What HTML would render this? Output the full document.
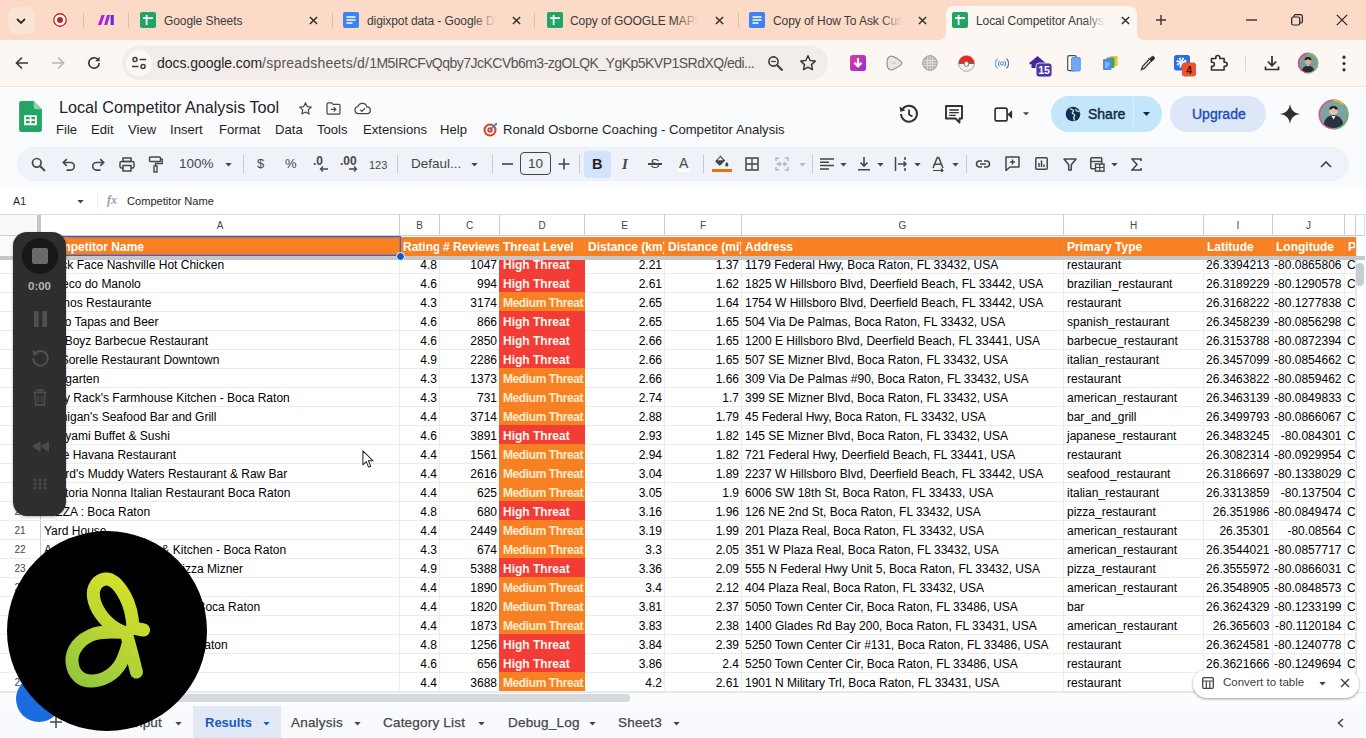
<!DOCTYPE html>
<html lang="en">
<head>
<meta charset="utf-8">
<title>Local Competitor Analysis Tool - Google Sheets</title>
<style>
*{box-sizing:border-box;margin:0;padding:0}
html,body{width:1366px;height:738px;overflow:hidden;background:#fff;font-family:"Liberation Sans",sans-serif;color:#1f1f1f}
div,span,svg{position:absolute}
span.i{position:static}
#tabbar{left:0;top:0;width:1366px;height:40px;background:#fbdbc8}
#addr{left:0;top:40px;width:1366px;height:47px;background:#fdf7f3;border-bottom:1px solid #f1e3da}
.tt{top:11px;height:20px;line-height:20px;font-size:12px;letter-spacing:-.08px;color:#3b3a3a;white-space:nowrap;overflow:hidden}
.tx{top:10px;width:20px;height:20px;line-height:20px;text-align:center;font-size:15px;color:#2e2e2e}
.sep{top:13px;width:1px;height:15px;background:#efb999}
#urlpill{left:122px;top:46px;width:706px;height:34px;border-radius:17px;background:#f2ecea}
#url{left:157px;top:46px;height:34px;line-height:34px;font-size:14px;letter-spacing:-.05px;color:#1f1f1f;white-space:nowrap}
#url span{position:static;color:#575553}
#docs{left:0;top:88px;width:1366px;height:127px;background:#f9fbfd}
#title{left:59px;top:96px;font-size:16.2px;line-height:22px;color:#1f1f1f;white-space:nowrap}
.menu{top:121px;font-size:13.1px;line-height:17px;color:#1f1f1f;white-space:nowrap}
#tb{left:17px;top:147px;width:1332px;height:34px;border-radius:17px;background:#eff3f9}
.tbt{font-size:13px;color:#444746;white-space:nowrap;line-height:16px}
.vs{top:155px;width:1px;height:18px;background:#c7cacf}
#fbar{left:0;top:187px;width:1366px;height:28px;background:#fff;border-bottom:1px solid #d9dce0}

#grid{left:0;top:215px;width:1356px;height:480px;background:#fff;overflow:hidden}
.ch{top:0;height:21px;line-height:22px;font-size:10px;color:#444746;text-align:center;background:#fff;border-right:1px solid #c9ccd1;border-bottom:1px solid #c9ccd1}
.hc{top:22px;height:19px;line-height:21px;font-size:12px;font-weight:bold;color:#fff;white-space:nowrap;overflow:hidden;padding-left:3px;border-right:1px solid #ee8a36;background:#f78122}
.r{left:0;width:1356px;height:19px;border-bottom:1px solid #eaecef}
.c{top:0;height:18px;line-height:20px;font-size:12px;color:#000;white-space:nowrap;overflow:hidden;border-right:1px solid #eaecef}
.n{text-align:right;padding-right:2px}
.n3{text-align:right;padding-right:2.500px}
.l{padding-left:3px}
.la{padding-left:3px}
.l2{padding-left:2px}
.hi{background:#f23d37;color:#fff6ee;font-weight:bold;font-size:12px;padding-left:4px;border-right:0;height:19px;top:-1px;line-height:22px}
.me{background:#f78122;color:#fdecd0;font-weight:bold;font-size:12px;padding-left:4px;border-right:0;height:19px;top:-1px;line-height:22px;letter-spacing:-.4px}
.rh{left:0;width:41px;top:0;height:18px;line-height:20px;font-size:10px;color:#444746;text-align:center;border-right:1px solid #c9ccd1;background:#fff}
.st{top:714px;font-size:13.500px;line-height:17px;color:#444746;white-space:nowrap;letter-spacing:.2px;-webkit-text-stroke:.25px #444746}</style>
</head>
<body>
<div id="tabbar"></div>
<div style="left:946px;top:6px;width:191px;height:34px;background:#fdf7f3;border-radius:8px 8px 0 0"></div>
<svg style="left:939px;top:33px" width="7" height="7" viewBox="0 0 7 7"><path d="M7 0V7H0A7 7 0 0 0 7 0z" fill="#fdf7f3"/></svg>
<svg style="left:1137px;top:33px" width="7" height="7" viewBox="0 0 7 7"><path d="M0 0V7H7A7 7 0 0 1 0 0z" fill="#fdf7f3"/></svg>
<div style="left:8px;top:7px;width:27px;height:27px;border-radius:8px;background:#fce4d5"></div>
<svg style="left:14px;top:15px" width="14" height="12" viewBox="0 0 14 12"><path d="M3 4l4 4 4-4" fill="none" stroke="#2b2b2b" stroke-width="1.8"/></svg>
<svg style="left:52px;top:12px" width="16" height="16" viewBox="0 0 18 18"><circle cx="9" cy="9" r="7" fill="#fff" stroke="#c5221f" stroke-width="1.5"/><circle cx="9" cy="9" r="3.4" fill="#c5221f"/></svg>
<div class="sep" style="left:83px"></div>
<svg style="left:98px;top:14px" width="17" height="12" viewBox="0 0 17 12"><path d="M0 11L3.6 1h3.2L3.2 11z" fill="#c413e6"/><path d="M6.2 11L9 1h3l-2.8 10z" fill="#8b2be2"/><rect x="12.6" y="1" width="3.2" height="10" fill="#6d28d9"/></svg>
<div class="sep" style="left:128px"></div>
<svg style="left:140px;top:12px" width="16" height="16" viewBox="0 0 16 16"><rect width="16" height="16" rx="2" fill="#21a464"/><path d="M3 6.2h10M6.6 3v10" stroke="#fff" stroke-width="1.7"/></svg>
<div class="tt" style="left:164px;width:140px">Google Sheets</div>
<svg style="left:309px;top:15.500px" width="9" height="9" viewBox="0 0 10 10"><path d="M1 1l8 8M9 1l-8 8" stroke="#2e2e2e" stroke-width="1.600"/></svg>
<svg style="left:343px;top:12px" width="16" height="16" viewBox="0 0 16 16"><rect width="16" height="16" rx="2" fill="#3d82f0"/><path d="M3.5 5h9M3.5 8h9M3.5 11h6" stroke="#fff" stroke-width="1.5"/></svg>
<div class="tt" style="left:367px;width:131px">digixpot data - Google D</div>
<div style="left:474px;top:11px;width:26px;height:20px;background:linear-gradient(90deg,rgba(251,219,200,0),rgba(251,219,200,1) 85%)"></div>
<svg style="left:512px;top:15.500px" width="9" height="9" viewBox="0 0 10 10"><path d="M1 1l8 8M9 1l-8 8" stroke="#2e2e2e" stroke-width="1.600"/></svg>
<svg style="left:547px;top:12px" width="16" height="16" viewBox="0 0 16 16"><rect width="16" height="16" rx="2" fill="#21a464"/><path d="M3 6.2h10M6.6 3v10" stroke="#fff" stroke-width="1.7"/></svg>
<div class="tt" style="left:570px;width:130px">Copy of GOOGLE MAPS</div>
<div style="left:676px;top:11px;width:26px;height:20px;background:linear-gradient(90deg,rgba(251,219,200,0),rgba(251,219,200,1) 85%)"></div>
<svg style="left:715px;top:15.500px" width="9" height="9" viewBox="0 0 10 10"><path d="M1 1l8 8M9 1l-8 8" stroke="#2e2e2e" stroke-width="1.600"/></svg>
<svg style="left:749px;top:12px" width="16" height="16" viewBox="0 0 16 16"><rect width="16" height="16" rx="2" fill="#3d82f0"/><path d="M3.5 5h9M3.5 8h9M3.5 11h6" stroke="#fff" stroke-width="1.5"/></svg>
<div class="tt" style="left:773px;width:132px">Copy of How To Ask Cus</div>
<div style="left:881px;top:11px;width:26px;height:20px;background:linear-gradient(90deg,rgba(251,219,200,0),rgba(251,219,200,1) 85%)"></div>
<svg style="left:918px;top:15.500px" width="9" height="9" viewBox="0 0 10 10"><path d="M1 1l8 8M9 1l-8 8" stroke="#2e2e2e" stroke-width="1.600"/></svg>
<svg style="left:952px;top:12px" width="16" height="16" viewBox="0 0 16 16"><rect width="16" height="16" rx="2" fill="#21a464"/><path d="M3 6.2h10M6.6 3v10" stroke="#fff" stroke-width="1.7"/></svg>
<div class="tt" style="left:976px;width:132px">Local Competitor Analys</div>
<div style="left:1084px;top:11px;width:26px;height:20px;background:linear-gradient(90deg,rgba(253,247,243,0),rgba(253,247,243,1) 85%)"></div>
<svg style="left:1121px;top:15.500px" width="9" height="9" viewBox="0 0 10 10"><path d="M1 1l8 8M9 1l-8 8" stroke="#2e2e2e" stroke-width="1.600"/></svg>
<div class="sep" style="left:332px"></div>
<div class="sep" style="left:534px"></div>
<div class="sep" style="left:738px"></div>
<svg style="left:1156px;top:15px" width="10" height="10" viewBox="0 0 10 10"><path d="M5 0v10M0 5h10" stroke="#3a3533" stroke-width="1.4"/></svg>
<svg style="left:1246px;top:19px" width="11" height="2" viewBox="0 0 11 2"><path d="M0 1h11" stroke="#222" stroke-width="1.3"/></svg>
<svg style="left:1291px;top:14px" width="12" height="12" viewBox="0 0 12 12"><rect x=".7" y="3" width="8" height="8" rx="1.5" fill="none" stroke="#222" stroke-width="1.2"/><path d="M3 3V2.2A1.5 1.5 0 0 1 4.5.7H9.8A1.5 1.5 0 0 1 11.3 2.2V7.5A1.5 1.5 0 0 1 9.8 9H9" fill="none" stroke="#222" stroke-width="1.2"/></svg>
<svg style="left:1336px;top:14px" width="12" height="12" viewBox="0 0 12 12"><path d="M.8.8l10.4 10.4M11.2.8L.8 11.2" stroke="#222" stroke-width="1.2"/></svg>
<div id="addr"></div>
<svg style="left:14px;top:55px" width="16" height="16" viewBox="0 0 16 16"><path d="M14 8H2.5M8 2.5L2.5 8 8 13.5" fill="none" stroke="#3a3a3a" stroke-width="1.7"/></svg>
<svg style="left:50px;top:55px" width="16" height="16" viewBox="0 0 16 16"><path d="M2 8h11.5M8 2.5L13.5 8 8 13.5" fill="none" stroke="#bdb7b3" stroke-width="1.7"/></svg>
<svg style="left:86px;top:55px" width="16" height="16" viewBox="0 0 16 16"><path d="M13.2 8A5.2 5.2 0 1 1 11.6 4.2" fill="none" stroke="#3a3a3a" stroke-width="1.7"/><path d="M13.6 1.8v4.4H9.2z" fill="#3a3a3a"/></svg>
<div id="urlpill"></div>
<div style="left:126px;top:50px;width:26px;height:26px;border-radius:13px;background:#fdf8f5"></div>
<svg style="left:131px;top:56px" width="16" height="14" viewBox="0 0 16 14"><circle cx="4" cy="3.5" r="2" fill="none" stroke="#3a3a3a" stroke-width="1.5"/><path d="M8.5 3.5H15M1 10.5h6.5" stroke="#3a3a3a" stroke-width="1.5"/><circle cx="12" cy="10.5" r="2" fill="none" stroke="#3a3a3a" stroke-width="1.5"/></svg>
<div id="url">docs.google.com<span style="letter-spacing:.22px">/spreadsheets/d/</span><span style="letter-spacing:-.52px">1M5IRCFvQqby7JcKCVb6m3-zgOLQK_YgKp5KVP1SRdXQ/edi...</span></div>
<svg style="left:767px;top:55px" width="17" height="17" viewBox="0 0 17 17"><circle cx="6.5" cy="6.5" r="4.6" fill="none" stroke="#3a3a3a" stroke-width="1.6"/><path d="M10 10l5.5 5.5" stroke="#3a3a3a" stroke-width="2"/><path d="M4.2 6.5h4.6" stroke="#3a3a3a" stroke-width="1.2"/></svg>
<svg style="left:799px;top:54px" width="18" height="18" viewBox="0 0 18 18"><path d="M9 1.8l2.2 4.7 5 .6-3.7 3.5 1 5L9 13.1l-4.5 2.5 1-5L1.8 7.1l5-.6z" fill="none" stroke="#3a3a3a" stroke-width="1.5" stroke-linejoin="round"/></svg>
<svg style="left:850px;top:55px" width="16" height="16" viewBox="0 0 16 16"><defs><linearGradient id="gp" x1="0" y1="0" x2="1" y2="1"><stop offset="0" stop-color="#e43b9b"/><stop offset="1" stop-color="#9a2bd3"/></linearGradient></defs><rect width="16" height="16" rx="2.500" fill="url(#gp)"/><path d="M8 3v8M4.500 7.800L8 11.500l3.500-3.700" fill="none" stroke="#fff" stroke-width="2.200"/></svg>
<svg style="left:886px;top:55px" width="17" height="16" viewBox="0 0 17 16"><path d="M4.500 1.200C7 .6 9.500 2.500 12 4.200C14.500 5.800 16 7 15.800 8.500C15.600 10 13.500 11 11 12.500C8.500 14 6.500 15.500 4.200 14.800C1.800 14 1 11 1 8C1 5 2 1.800 4.500 1.200z" fill="#e9e6e3" stroke="#8f8c8a" stroke-width="1.100"/><path d="M6 8h4" stroke="#c9c5c2" stroke-width="1.200"/></svg>
<svg style="left:922px;top:55px" width="16" height="16" viewBox="0 0 16 16"><circle cx="8" cy="8" r="7.400" fill="#b9b6b3"/><path d="M1 5.500h14M.600 8h14.800M1 10.500h14M5.500 1v14M8 .600v14.800M10.500 1v14" fill="none" stroke="#e4e1de" stroke-width=".800"/><circle cx="8" cy="8" r="7.400" fill="none" stroke="#a29f9c" stroke-width=".900"/></svg>
<svg style="left:958px;top:55px" width="17" height="17" viewBox="0 0 17 17"><circle cx="8.500" cy="8.500" r="7.800" fill="#f4f4f4" stroke="#9a9a9a" stroke-width=".900"/><path d="M.700 8.500a7.800 7.800 0 0 1 15.600 0z" fill="#e32b22"/><path d="M.700 8.500h15.600" stroke="#6a6a6a" stroke-width="1"/><circle cx="8.500" cy="9" r="2.400" fill="#fff" stroke="#7a7a7a" stroke-width="1"/></svg>
<svg style="left:995px;top:57px" width="14" height="13" viewBox="0 0 14 13"><circle cx="7" cy="6.500" r="1.600" fill="none" stroke="#5d7fe6" stroke-width="1"/><path d="M4.600 3.800a3.600 3.600 0 0 0 0 5.400M9.400 3.800a3.600 3.600 0 0 1 0 5.400" fill="none" stroke="#5a86ea" stroke-width="1.100"/><path d="M2.600 1.600a6.500 6.500 0 0 0 0 9.800" fill="none" stroke="#3fc0d8" stroke-width="1.200"/><path d="M11.400 1.600a6.500 6.500 0 0 1 0 9.800" fill="none" stroke="#6a62d8" stroke-width="1.200"/></svg>
<svg style="left:1029px;top:54px" width="24" height="24" viewBox="0 0 24 24"><path d="M1 8.500L8.500 2 16 8.500l-1.500 1.200V14H2.500V9.700z" fill="#45249c"/><path d="M.500 9.500l3-.800M16.500 9.500l-3-.800" stroke="#45249c" stroke-width="2"/><rect x="7" y="9" width="16" height="14" rx="3" fill="#4b3aa6" stroke="#fdf7f3" stroke-width=".800"/><text x="15" y="20.300" font-family="Liberation Sans,sans-serif" font-weight="bold" font-size="10.500" fill="#fff" text-anchor="middle">15</text></svg>
<svg style="left:1067px;top:55px" width="14" height="17" viewBox="0 0 14 17"><rect x=".700" y=".700" width="8.500" height="15" rx="1.500" fill="#fff" stroke="#4a4a4a" stroke-width="1.200"/><rect x="4.500" y="2.500" width="8.800" height="13.500" rx="1.300" fill="#6fa8f5" stroke="#4f86dc" stroke-width=".800"/></svg>
<svg style="left:1103px;top:56px" width="15" height="14" viewBox="0 0 15 14"><rect x="6.500" y="0" width="8" height="10" rx="1.200" fill="#f2c037"/><rect x="3.500" y="1.500" width="8" height="10.500" rx="1.200" fill="#3aa862"/><rect x="0" y="3" width="8.500" height="11" rx="1.200" fill="#4d8af0"/><path d="M2 7h4.500M2 9h4.500M2 11h3" stroke="#cfe0fc" stroke-width=".900"/></svg>
<svg style="left:1140px;top:55px" width="15" height="16" viewBox="0 0 15 16"><path d="M8.800 4.800l-6.300 6.800-1 3 2.800-1.200 6.300-6.800" fill="none" stroke="#3a3a3a" stroke-width="1.400"/><path d="M8.200 3.200l3.800 3.600M9.500 4.200l2-2.300a1.700 1.700 0 0 1 2.500 2.300l-2.200 2.200z" fill="#2f2f2f" stroke="#2f2f2f" stroke-width="1"/></svg>
<svg style="left:1173px;top:54px" width="24" height="24" viewBox="0 0 24 24"><rect x="1" y="1" width="16" height="15.500" rx="2.500" fill="#2a6fe0"/><circle cx="8.500" cy="8.500" r="3.800" fill="none" stroke="#fff" stroke-width="2.600" stroke-dasharray="1.700 1.300"/><circle cx="8.500" cy="8.500" r="2.600" fill="#e9f1ff"/><rect x="9" y="8.500" width="14" height="14" rx="3" fill="#f0512f"/><text x="16" y="19.500" font-family="Liberation Sans,sans-serif" font-size="10" font-weight="bold" fill="#3a1208" text-anchor="middle">4</text></svg>
<svg style="left:1210px;top:54px" width="18" height="17" viewBox="0 0 18 17"><path d="M1.500 4.500h4.300V3.500a2 2 0 0 1 4 0v1h4.300v3.800h1a2 2 0 0 1 0 4h-1V16H1.500v-3.700h.8a2 2 0 0 0 0-4h-.8z" fill="none" stroke="#2f2f2f" stroke-width="1.600" stroke-linejoin="round"/></svg>
<div style="left:1245px;top:55px;width:1px;height:16px;background:#e3d3c9"></div>
<svg style="left:1263px;top:54px" width="18" height="18" viewBox="0 0 18 18"><path d="M9 2v9M4.800 7.500L9 11.700l4.200-4.200M2.500 12.500v3h13v-3" fill="none" stroke="#2f2f2f" stroke-width="1.7"/></svg>
<svg style="left:1297px;top:52px" width="22" height="22" viewBox="0 0 22 22"><circle cx="11" cy="11" r="10.400" fill="#d9536f"/><path d="M11 .600a10.400 10.400 0 0 1 0 20.800z" fill="#6fbf73"/><path d="M11 .600a10.400 10.400 0 0 1 7.400 3z" fill="#e8b83a"/><circle cx="11" cy="11" r="8.900" fill="#7f9aa0"/><path d="M5 18a6.300 6 0 0 1 12 0a8.900 8.900 0 0 1-12 0z" fill="#262c38"/><circle cx="11" cy="9" r="3.300" fill="#d9b092"/><path d="M7.600 8.300a3.400 3.200 0 0 1 6.800 0c-1.500.100-2.700-.500-3.400-1.500-.700 1-1.900 1.600-3.400 1.500z" fill="#1b1b1b"/><path d="M9.800 12.500l1.200 2.300 1.200-2.300z" fill="#efefef"/></svg>
<svg style="left:1342px;top:55px" width="4" height="17" viewBox="0 0 4 17"><circle cx="2" cy="2.200" r="1.600" fill="#2f2f2f"/><circle cx="2" cy="8.500" r="1.600" fill="#2f2f2f"/><circle cx="2" cy="14.800" r="1.600" fill="#2f2f2f"/></svg>
<div id="docs"></div>
<svg style="left:19px;top:101px" width="23" height="31" viewBox="0 0 25 34"><path d="M2.500 0H16l9 9v22.500a2.500 2.500 0 0 1-2.500 2.500h-20A2.500 2.500 0 0 1 0 31.500v-29A2.500 2.500 0 0 1 2.500 0z" fill="#22a565"/><path d="M16 0l9 9h-6.500A2.500 2.500 0 0 1 16 6.500z" fill="#8ed1b1"/><path d="M5.500 15.500h14v11h-14zM7.500 17.500v2.500h4v-2.500zM13.500 17.500v2.500h4v-2.500zM7.500 22v2.500h4V22zM13.500 22v2.500h4V22z" fill="#fff" fill-rule="evenodd"/></svg>
<div id="title">Local Competitor Analysis Tool</div>
<svg style="left:298px;top:101px" width="15" height="15" viewBox="0 0 18 18"><path d="M9 2.200l2.100 4.500 4.900.6-3.600 3.400.9 4.900L9 13.200l-4.300 2.400.9-4.900L2 7.300l4.900-.6z" fill="none" stroke="#444746" stroke-width="1.400" stroke-linejoin="round"/></svg>
<svg style="left:326px;top:102px" width="15" height="13" viewBox="0 0 17 15"><path d="M1 2.500A1.500 1.500 0 0 1 2.500 1h4l1.600 1.800h6.400A1.500 1.500 0 0 1 16 4.300v8.200a1.500 1.500 0 0 1-1.500 1.500h-12A1.500 1.500 0 0 1 1 12.500z" fill="none" stroke="#444746" stroke-width="1.400"/><path d="M5.500 8.500h5.500M8.800 6l2.500 2.500L8.800 11" fill="none" stroke="#444746" stroke-width="1.300"/></svg>
<svg style="left:354px;top:102px" width="17" height="12.500" viewBox="0 0 19 14"><path d="M5 13a4 4 0 0 1-.6-7.950A5.200 5.200 0 0 1 14.400 5.400 3.800 3.800 0 0 1 14.500 13z" fill="none" stroke="#444746" stroke-width="1.400"/><path d="M6.800 8.600l2 2 3.500-3.600" fill="none" stroke="#444746" stroke-width="1.300"/></svg>
<div class="menu" id="m_File" style="left:56px">File</div>
<div class="menu" id="m_Edit" style="left:91px">Edit</div>
<div class="menu" id="m_View" style="left:128px">View</div>
<div class="menu" id="m_Insert" style="left:170px">Insert</div>
<div class="menu" id="m_Format" style="left:219px">Format</div>
<div class="menu" id="m_Data" style="left:275px">Data</div>
<div class="menu" id="m_Tools" style="left:317px">Tools</div>
<div class="menu" id="m_Extensions" style="left:363px">Extensions</div>
<div class="menu" id="m_Help" style="left:440px">Help</div>
<svg style="left:483px;top:122px" width="15" height="15" viewBox="0 0 15 15"><circle cx="7" cy="8" r="6.500" fill="#d5402b"/><circle cx="7" cy="8" r="4.500" fill="#f4f4f4"/><circle cx="7" cy="8" r="2.700" fill="#d5402b"/><circle cx="7" cy="8" r="1" fill="#f4f4f4"/><path d="M7 8L13.500 1.500" stroke="#3f7fd9" stroke-width="1.600"/><path d="M11.500 1l2.500 0 0 2.500z" fill="#3f7fd9"/></svg>
<div class="menu" id="m_ro" style="left:503px">Ronald Osborne Coaching - Competitor Analysis</div>
<svg style="left:898px;top:103px" width="22" height="22" viewBox="0 0 22 22"><path d="M4.200 6.500A8 8 0 1 1 3 11" fill="none" stroke="#2f3133" stroke-width="1.900"/><path d="M1.500 3.500l.8 5.300 5.200-1.300z" fill="#2f3133"/><path d="M11 6.500V11.500l3.500 2" fill="none" stroke="#2f3133" stroke-width="1.800"/></svg>
<svg style="left:944px;top:104px" width="20" height="20" viewBox="0 0 20 20"><path d="M2 2h16v12.500H15.500V18.500L11.500 14.500H2z" fill="none" stroke="#2f3133" stroke-width="1.900" stroke-linejoin="round"/><path d="M5.200 6h9.600M5.200 8.700h9.600M5.200 11.300h6.500" stroke="#2f3133" stroke-width="1.300"/></svg>
<svg style="left:994px;top:107px" width="19.500" height="15" viewBox="0 0 22 17"><path d="M1.200 3.500A2.300 2.300 0 0 1 3.500 1.200h9A2.300 2.300 0 0 1 14.800 3.500v10a2.300 2.300 0 0 1-2.300 2.300h-9A2.300 2.300 0 0 1 1.200 13.500z" fill="none" stroke="#2f3133" stroke-width="1.900"/><path d="M15 8.500L20.500 3.800V13.200z" fill="#2f3133"/></svg>
<svg style="left:1023px;top:112px" width="6" height="4" viewBox="0 0 8 5"><path d="M0 0h8L4 4.500z" fill="#444746"/></svg>
<div style="left:1051px;top:96px;width:111px;height:36px;border-radius:18px;background:#c4e6fb"></div>
<div style="left:1133px;top:97px;width:1px;height:34px;background:#d9eefb"></div>
<svg style="left:1065px;top:106px" width="16" height="16" viewBox="0 0 16 16"><circle cx="8" cy="8" r="7.300" fill="#0f2f4f"/><path d="M5 2.500c1.500 1 2.800.8 3.500 2 .6 1-1.500 1.300-1.200 2.600.2 1 2 .6 2.400 1.900.3 1-1.200 1.800-1 3 .1.800.8 1.200.6 2.500M11 3c-.5 1 .3 1.700 1.200 2 .8.300 1.500.2 2.300 1" fill="none" stroke="#c4e6fb" stroke-width="1.300"/></svg>
<div id="share" style="left:1088px;top:105px;font-size:14px;line-height:18px;color:#0d2a45;-webkit-text-stroke:.4px #0d2a45">Share</div>
<svg style="left:1143px;top:112px" width="7" height="4" viewBox="0 0 9 5"><path d="M0 0h9L4.500 5z" fill="#0d2a45"/></svg>
<div style="left:1170px;top:96px;width:96px;height:36px;border-radius:18px;background:#dde7f7"></div>
<div id="upg" style="left:1192px;top:105px;font-size:14px;line-height:18px;color:#1a4bb5;-webkit-text-stroke:.35px #1a4bb5">Upgrade</div>
<svg style="left:1279px;top:103px" width="22" height="22" viewBox="0 0 22 22"><path d="M11 1c.8 6 4 9.200 10 10-6 .8-9.200 4-10 10-.8-6-4-9.200-10-10 6-.8 9.200-4 10-10z" fill="#303030"/></svg>
<svg style="left:1318px;top:99px" width="31" height="31" viewBox="0 0 31 31"><circle cx="15.500" cy="15.500" r="15" fill="#d8567a"/><circle cx="15.500" cy="15.500" r="13.400" fill="#7fa2a6"/><path d="M15.500 1.300a14.200 14.200 0 0 1 0 28.400" fill="none" stroke="#63b96a" stroke-width="1.700"/><path d="M15.500 1.300a14.200 14.200 0 0 1 10 4.200" fill="none" stroke="#e8c13a" stroke-width="1.700"/><circle cx="15.500" cy="12" r="4.300" fill="#e5c1a5"/><path d="M11.200 10.500a4.300 3.600 0 0 1 8.600 0c-2 .3-3.500-.6-4.300-2-.9 1.400-2.400 2.100-4.300 2z" fill="#1d1d1d"/><path d="M6 25a9.500 9 0 0 1 19 0a13.400 13.400 0 0 1-19 0z" fill="#2a3140"/><path d="M13.500 17l2 3.500 2-3.500z" fill="#f2f2f2"/></svg>
<div id="tb"></div>
<svg style="left:31px;top:157px" width="15" height="15" viewBox="0 0 15 15"><circle cx="5.800" cy="5.800" r="4.300" fill="none" stroke="#444746" stroke-width="1.700"/><path d="M9 9l5 5" stroke="#444746" stroke-width="1.900"/></svg>
<svg style="left:61px;top:158px" width="15" height="13" viewBox="0 0 15 13"><path d="M3 4.500h6.500a3.800 3.800 0 0 1 0 7.600H5.500" fill="none" stroke="#444746" stroke-width="1.600"/><path d="M5.800 1.200L2.300 4.500l3.500 3.300" fill="none" stroke="#444746" stroke-width="1.600"/></svg>
<svg style="left:91px;top:158px" width="15" height="13" viewBox="0 0 15 13"><path d="M12 4.500H5.500a3.800 3.800 0 0 0 0 7.600H9.500" fill="none" stroke="#444746" stroke-width="1.600"/><path d="M9.200 1.200l3.500 3.300-3.500 3.300" fill="none" stroke="#444746" stroke-width="1.600"/></svg>
<svg style="left:119px;top:157px" width="16" height="15" viewBox="0 0 16 15"><rect x="4" y="1" width="8" height="3.500" fill="none" stroke="#444746" stroke-width="1.500"/><rect x="1" y="4.500" width="14" height="6.500" rx="1.500" fill="none" stroke="#444746" stroke-width="1.500"/><rect x="4" y="8.500" width="8" height="5.500" fill="#eff3f9" stroke="#444746" stroke-width="1.500"/></svg>
<svg style="left:148px;top:156px" width="15" height="17" viewBox="0 0 15 17"><rect x="1.500" y="1" width="11" height="4.500" rx="1" fill="none" stroke="#444746" stroke-width="1.500"/><path d="M12.500 3.200h1.700v4.300H7.500v2.500" fill="none" stroke="#444746" stroke-width="1.400"/><rect x="6" y="10" width="3" height="6" fill="none" stroke="#444746" stroke-width="1.400"/></svg>
<div class="tbt" id="t_zoom" style="left:179px;top:156px;font-size:13.500px">100%</div>
<svg style="left:224.5px;top:162.5px" width="7" height="4" viewBox="0 0 8 5"><path d="M0 0h8L4 4.500z" fill="#444746"/></svg>
<div class="vs" style="left:243px"></div>
<div class="tbt" style="left:257px;top:156px;font-size:13px">$</div>
<div class="tbt" style="left:285px;top:156px;font-size:13px">%</div>
<div class="tbt" id="t_d0" style="left:313px;top:153px;font-size:12px;font-weight:bold">.0</div>
<svg style="left:319px;top:166px" width="9" height="6" viewBox="0 0 9 6"><path d="M9 3H1.500M4 .5L1.500 3 4 5.500" fill="none" stroke="#444746" stroke-width="1.300"/></svg>
<div class="tbt" id="t_d00" style="left:340px;top:153px;font-size:12px;font-weight:bold">.00</div>
<svg style="left:349px;top:166px" width="9" height="6" viewBox="0 0 9 6"><path d="M0 3h7.500M5 .5L7.500 3 5 5.500" fill="none" stroke="#444746" stroke-width="1.300"/></svg>
<div class="tbt" id="t_123" style="left:369px;top:157px;font-size:11px">123</div>
<div class="vs" style="left:397px"></div>
<div class="tbt" id="t_font" style="left:411px;top:156px;font-size:13.500px">Defaul...</div>
<svg style="left:470.5px;top:162.5px" width="7" height="4" viewBox="0 0 8 5"><path d="M0 0h8L4 4.500z" fill="#444746"/></svg>
<div class="vs" style="left:492px"></div>
<svg style="left:502px;top:163px" width="11" height="2" viewBox="0 0 11 2"><path d="M0 1h11" stroke="#444746" stroke-width="1.600"/></svg>
<div style="left:520px;top:152px;width:31px;height:23px;border:1px solid #444746;border-radius:4px;background:#eff3f9"></div>
<div class="tbt" id="t_size" style="left:520px;top:156px;width:31px;text-align:center;font-size:13.500px">10</div>
<svg style="left:558px;top:158px" width="12" height="12" viewBox="0 0 12 12"><path d="M6 .5v11M.5 6h11" stroke="#444746" stroke-width="1.600"/></svg>
<div class="vs" style="left:579px"></div>
<div style="left:584px;top:151px;width:27px;height:27px;border-radius:4px;background:#d3e3fd"></div>
<div class="tbt" style="left:592px;top:155px;font-size:14.500px;font-weight:bold;color:#1f1f1f;line-height:18px">B</div>
<div class="tbt" style="left:622px;top:155px;font-size:15px;font-style:italic;font-family:'Liberation Serif',serif;line-height:18px;font-weight:bold">I</div>
<div class="tbt" style="left:650.500px;top:155px;font-size:13.500px;line-height:18px">S</div>
<div style="left:648px;top:163px;width:14px;height:1.500px;background:#444746"></div>
<div class="tbt" style="left:679px;top:154px;font-size:14px;line-height:18px">A</div>
<div style="left:677px;top:169px;width:14px;height:3px;background:#fbfcfe"></div>
<div class="vs" style="left:703px"></div>
<svg style="left:714px;top:154px" width="15" height="13" viewBox="0 0 15 13"><path d="M5.200 .800L6.300 1.900 1.700 6.500a1 1 0 0 0 0 1.400l3.400 3.400a1 1 0 0 0 1.400 0L11.300 6.500 5.600 .800z" fill="#444746"/><path d="M3.300 6.300L6.300 3.300 9.300 6.300z" fill="#eff3f9"/><path d="M12.800 8s1.600 1.900 1.600 2.900a1.600 1.600 0 0 1-3.200 0c0-1 1.600-2.900 1.600-2.900z" fill="#444746"/></svg>
<div style="left:712px;top:169px;width:20px;height:3px;background:#e8710a"></div>
<svg style="left:745px;top:157px" width="14" height="14" viewBox="0 0 14 14"><rect x="1" y="1" width="12" height="12" fill="none" stroke="#444746" stroke-width="1.500"/><path d="M7 1v12M1 7h12" stroke="#444746" stroke-width="1.400"/></svg>
<svg style="left:775px;top:157px" width="14" height="14" viewBox="0 0 14 14"><path d="M1 4V1h3M10 1h3v3M13 10v3h-3M4 13H1v-3" fill="none" stroke="#b4b8bd" stroke-width="1.500"/><path d="M1.500 7h4M3.800 5L5.800 7 3.800 9M12.500 7h-4M10.200 5L8.200 7l2 2" fill="none" stroke="#b4b8bd" stroke-width="1.300"/></svg>
<svg style="left:798.5px;top:162.5px" width="7" height="4" viewBox="0 0 8 5"><path d="M0 0h8L4 4.500z" fill="#b4b8bd"/></svg>
<div class="vs" style="left:812px"></div>
<svg style="left:820px;top:158px" width="14" height="12" viewBox="0 0 14 12"><path d="M0 1h14M0 4.300h9M0 7.600h14M0 11h9" stroke="#444746" stroke-width="1.500"/></svg>
<svg style="left:839.5px;top:162.5px" width="7" height="4" viewBox="0 0 8 5"><path d="M0 0h8L4 4.500z" fill="#444746"/></svg>
<svg style="left:857px;top:157px" width="14" height="14" viewBox="0 0 14 14"><path d="M7 0v8.500M3.500 5.500L7 9l3.500-3.500M1 12.700h12" fill="none" stroke="#444746" stroke-width="1.600"/></svg>
<svg style="left:876.5px;top:162.5px" width="7" height="4" viewBox="0 0 8 5"><path d="M0 0h8L4 4.500z" fill="#444746"/></svg>
<svg style="left:894px;top:157px" width="14" height="14" viewBox="0 0 14 14"><path d="M1.500 0v14M11 0v3M11 11v3M4 7h8M9.500 4.500L12 7 9.500 9.500" fill="none" stroke="#444746" stroke-width="1.500"/></svg>
<svg style="left:913.5px;top:162.5px" width="7" height="4" viewBox="0 0 8 5"><path d="M0 0h8L4 4.500z" fill="#444746"/></svg>
<svg style="left:931px;top:156px" width="15" height="16" viewBox="0 0 15 16"><path d="M2 12L6.300 1.500h1.400L12 12M3.700 8.300h6.600" fill="none" stroke="#444746" stroke-width="1.500"/><path d="M2 14.500h10M10 12.500l2 2-2 2" fill="none" stroke="#444746" stroke-width="1.200"/></svg>
<svg style="left:951.5px;top:162.5px" width="7" height="4" viewBox="0 0 8 5"><path d="M0 0h8L4 4.500z" fill="#444746"/></svg>
<div class="vs" style="left:966px"></div>
<svg style="left:975px;top:160px" width="16" height="8" viewBox="0 0 16 8"><path d="M7 1H4.500a3 3 0 0 0 0 6H7M9 1h2.500a3 3 0 0 1 0 6H9M5 4h6" fill="none" stroke="#444746" stroke-width="1.600"/></svg>
<svg style="left:1005px;top:156px" width="15" height="15" viewBox="0 0 15 15"><path d="M1 1h13v10H5l-4 3.500z" fill="none" stroke="#444746" stroke-width="1.500" stroke-linejoin="round"/><path d="M7.500 3.500v5M5 6h5" stroke="#444746" stroke-width="1.400"/></svg>
<svg style="left:1035px;top:157px" width="13" height="13" viewBox="0 0 13 13"><rect x=".8" y=".8" width="11.400" height="11.400" rx="1" fill="none" stroke="#444746" stroke-width="1.500"/><path d="M4 10V6M6.500 10V3.500M9 10V7.500" stroke="#444746" stroke-width="1.500"/></svg>
<svg style="left:1063px;top:158px" width="14" height="13" viewBox="0 0 14 13"><path d="M1 1h12L8.300 6.800V12H5.700V6.800z" fill="none" stroke="#444746" stroke-width="1.500" stroke-linejoin="round"/></svg>
<svg style="left:1090px;top:157px" width="15" height="15" viewBox="0 0 15 15"><rect x=".8" y=".8" width="11" height="11" rx="1" fill="none" stroke="#444746" stroke-width="1.500"/><path d="M.8 4.500h11" stroke="#444746" stroke-width="1.400"/><rect x="5.500" y="7" width="8.500" height="7.200" fill="#eff3f9" stroke="#444746" stroke-width="1.400"/><path d="M5.500 10.500H14M9.700 7v7" stroke="#444746" stroke-width="1.200"/></svg>
<svg style="left:1110.5px;top:162.5px" width="7" height="4" viewBox="0 0 8 5"><path d="M0 0h8L4 4.500z" fill="#444746"/></svg>
<svg style="left:1131px;top:158px" width="11" height="13" viewBox="0 0 11 13"><path d="M10 3V1H1l5 5.500L1 12h9v-2" fill="none" stroke="#444746" stroke-width="1.600"/></svg>
<svg style="left:1320px;top:160px" width="12" height="8" viewBox="0 0 12 8"><path d="M1 7l5-5 5 5" fill="none" stroke="#444746" stroke-width="1.700"/></svg>
<div id="fbar"></div>
<div id="cellref" style="left:13px;top:194px;font-size:10.700px;line-height:14px;color:#1f1f1f">A1</div>
<svg style="left:76.5px;top:199.5px" width="7" height="4" viewBox="0 0 8 5"><path d="M0 0h8L4 4.500z" fill="#444746"/></svg>
<div style="left:97px;top:193px;width:1px;height:16px;background:#eceef1"></div>
<div id="fx" style="left:107px;top:193px;font-size:12px;line-height:15px;font-style:italic;font-weight:bold;font-family:'Liberation Serif',serif;color:#9a9ea3">fx</div>
<div id="fval" style="left:127px;top:194px;font-size:11.1px;line-height:14px;color:#1f1f1f">Competitor Name</div>
<div id="grid">
<div class="r" style="top:40px"><div class="rh">7</div><div class="c la" style="left:41px;width:359px">Black Face Nashville Hot Chicken</div><div class="c n" style="left:400px;width:40px">4.8</div><div class="c n" style="left:440px;width:60px">1047</div><div class="c hi" style="left:499px;width:86px">High Threat</div><div class="c n" style="left:585px;width:80px">2.21</div><div class="c n" style="left:665px;width:77px">1.37</div><div class="c l" style="left:742px;width:322px">1179 Federal Hwy, Boca Raton, FL 33432, USA</div><div class="c l" style="left:1064px;width:140px">restaurant</div><div class="c n3" style="left:1204px;width:69px">26.3394213</div><div class="c n3" style="left:1273px;width:72px">-80.0865806</div><div class="c l2" style="left:1345px;width:11px">C</div></div>
<div class="r" style="top:59px"><div class="rh">8</div><div class="c la" style="left:41px;width:359px">Boteco do Manolo</div><div class="c n" style="left:400px;width:40px">4.6</div><div class="c n" style="left:440px;width:60px">994</div><div class="c hi" style="left:499px;width:86px">High Threat</div><div class="c n" style="left:585px;width:80px">2.61</div><div class="c n" style="left:665px;width:77px">1.62</div><div class="c l" style="left:742px;width:322px">1825 W Hillsboro Blvd, Deerfield Beach, FL 33442, USA</div><div class="c l" style="left:1064px;width:140px">brazilian_restaurant</div><div class="c n3" style="left:1204px;width:69px">26.3189229</div><div class="c n3" style="left:1273px;width:72px">-80.1290578</div><div class="c l2" style="left:1345px;width:11px">C</div></div>
<div class="r" style="top:78px"><div class="rh">9</div><div class="c la" style="left:41px;width:359px">Latinos Restaurante</div><div class="c n" style="left:400px;width:40px">4.3</div><div class="c n" style="left:440px;width:60px">3174</div><div class="c me" style="left:499px;width:86px">Medium Threat</div><div class="c n" style="left:585px;width:80px">2.65</div><div class="c n" style="left:665px;width:77px">1.64</div><div class="c l" style="left:742px;width:322px">1754 W Hillsboro Blvd, Deerfield Beach, FL 33442, USA</div><div class="c l" style="left:1064px;width:140px">restaurant</div><div class="c n3" style="left:1204px;width:69px">26.3168222</div><div class="c n3" style="left:1273px;width:72px">-80.1277838</div><div class="c l2" style="left:1345px;width:11px">C</div></div>
<div class="r" style="top:97px"><div class="rh">10</div><div class="c la" style="left:41px;width:359px">Patio Tapas and Beer</div><div class="c n" style="left:400px;width:40px">4.6</div><div class="c n" style="left:440px;width:60px">866</div><div class="c hi" style="left:499px;width:86px">High Threat</div><div class="c n" style="left:585px;width:80px">2.65</div><div class="c n" style="left:665px;width:77px">1.65</div><div class="c l" style="left:742px;width:322px">504 Via De Palmas, Boca Raton, FL 33432, USA</div><div class="c l" style="left:1064px;width:140px">spanish_restaurant</div><div class="c n3" style="left:1204px;width:69px">26.3458239</div><div class="c n3" style="left:1273px;width:72px">-80.0856298</div><div class="c l2" style="left:1345px;width:11px">C</div></div>
<div class="r" style="top:116px"><div class="rh">11</div><div class="c la" style="left:41px;width:359px">Fat Boyz Barbecue Restaurant</div><div class="c n" style="left:400px;width:40px">4.6</div><div class="c n" style="left:440px;width:60px">2850</div><div class="c hi" style="left:499px;width:86px">High Threat</div><div class="c n" style="left:585px;width:80px">2.66</div><div class="c n" style="left:665px;width:77px">1.65</div><div class="c l" style="left:742px;width:322px">1200 E Hillsboro Blvd, Deerfield Beach, FL 33441, USA</div><div class="c l" style="left:1064px;width:140px">barbecue_restaurant</div><div class="c n3" style="left:1204px;width:69px">26.3153788</div><div class="c n3" style="left:1273px;width:72px">-80.0872394</div><div class="c l2" style="left:1345px;width:11px">C</div></div>
<div class="r" style="top:135px"><div class="rh">12</div><div class="c la" style="left:41px;width:359px">Le Sorelle Restaurant Downtown</div><div class="c n" style="left:400px;width:40px">4.9</div><div class="c n" style="left:440px;width:60px">2286</div><div class="c hi" style="left:499px;width:86px">High Threat</div><div class="c n" style="left:585px;width:80px">2.66</div><div class="c n" style="left:665px;width:77px">1.65</div><div class="c l" style="left:742px;width:322px">507 SE Mizner Blvd, Boca Raton, FL 33432, USA</div><div class="c l" style="left:1064px;width:140px">italian_restaurant</div><div class="c n3" style="left:1204px;width:69px">26.3457099</div><div class="c n3" style="left:1273px;width:72px">-80.0854662</div><div class="c l2" style="left:1345px;width:11px">C</div></div>
<div class="r" style="top:154px"><div class="rh">13</div><div class="c la" style="left:41px;width:359px">Biergarten</div><div class="c n" style="left:400px;width:40px">4.3</div><div class="c n" style="left:440px;width:60px">1373</div><div class="c me" style="left:499px;width:86px">Medium Threat</div><div class="c n" style="left:585px;width:80px">2.66</div><div class="c n" style="left:665px;width:77px">1.66</div><div class="c l" style="left:742px;width:322px">309 Via De Palmas #90, Boca Raton, FL 33432, USA</div><div class="c l" style="left:1064px;width:140px">restaurant</div><div class="c n3" style="left:1204px;width:69px">26.3463822</div><div class="c n3" style="left:1273px;width:72px">-80.0859462</div><div class="c l2" style="left:1345px;width:11px">C</div></div>
<div class="r" style="top:173px"><div class="rh">14</div><div class="c la" style="left:41px;width:359px">Gary Rack&#x27;s Farmhouse Kitchen - Boca Raton</div><div class="c n" style="left:400px;width:40px">4.3</div><div class="c n" style="left:440px;width:60px">731</div><div class="c me" style="left:499px;width:86px">Medium Threat</div><div class="c n" style="left:585px;width:80px">2.74</div><div class="c n" style="left:665px;width:77px">1.7</div><div class="c l" style="left:742px;width:322px">399 SE Mizner Blvd, Boca Raton, FL 33432, USA</div><div class="c l" style="left:1064px;width:140px">american_restaurant</div><div class="c n3" style="left:1204px;width:69px">26.3463139</div><div class="c n3" style="left:1273px;width:72px">-80.0849833</div><div class="c l2" style="left:1345px;width:11px">C</div></div>
<div class="r" style="top:192px"><div class="rh">15</div><div class="c la" style="left:41px;width:359px">Flanigan&#x27;s Seafood Bar and Grill</div><div class="c n" style="left:400px;width:40px">4.4</div><div class="c n" style="left:440px;width:60px">3714</div><div class="c me" style="left:499px;width:86px">Medium Threat</div><div class="c n" style="left:585px;width:80px">2.88</div><div class="c n" style="left:665px;width:77px">1.79</div><div class="c l" style="left:742px;width:322px">45 Federal Hwy, Boca Raton, FL 33432, USA</div><div class="c l" style="left:1064px;width:140px">bar_and_grill</div><div class="c n3" style="left:1204px;width:69px">26.3499793</div><div class="c n3" style="left:1273px;width:72px">-80.0866067</div><div class="c l2" style="left:1345px;width:11px">C</div></div>
<div class="r" style="top:211px"><div class="rh">16</div><div class="c la" style="left:41px;width:359px">Umiyami Buffet &amp; Sushi</div><div class="c n" style="left:400px;width:40px">4.6</div><div class="c n" style="left:440px;width:60px">3891</div><div class="c hi" style="left:499px;width:86px">High Threat</div><div class="c n" style="left:585px;width:80px">2.93</div><div class="c n" style="left:665px;width:77px">1.82</div><div class="c l" style="left:742px;width:322px">145 SE Mizner Blvd, Boca Raton, FL 33432, USA</div><div class="c l" style="left:1064px;width:140px">japanese_restaurant</div><div class="c n3" style="left:1204px;width:69px">26.3483245</div><div class="c n3" style="left:1273px;width:72px">-80.084301</div><div class="c l2" style="left:1345px;width:11px">C</div></div>
<div class="r" style="top:230px"><div class="rh">17</div><div class="c la" style="left:41px;width:359px">Little Havana Restaurant</div><div class="c n" style="left:400px;width:40px">4.4</div><div class="c n" style="left:440px;width:60px">1561</div><div class="c me" style="left:499px;width:86px">Medium Threat</div><div class="c n" style="left:585px;width:80px">2.94</div><div class="c n" style="left:665px;width:77px">1.82</div><div class="c l" style="left:742px;width:322px">721 Federal Hwy, Deerfield Beach, FL 33441, USA</div><div class="c l" style="left:1064px;width:140px">restaurant</div><div class="c n3" style="left:1204px;width:69px">26.3082314</div><div class="c n3" style="left:1273px;width:72px">-80.0929954</div><div class="c l2" style="left:1345px;width:11px">C</div></div>
<div class="r" style="top:249px"><div class="rh">18</div><div class="c la" style="left:41px;width:359px">Beard&#x27;s Muddy Waters Restaurant &amp; Raw Bar</div><div class="c n" style="left:400px;width:40px">4.4</div><div class="c n" style="left:440px;width:60px">2616</div><div class="c me" style="left:499px;width:86px">Medium Threat</div><div class="c n" style="left:585px;width:80px">3.04</div><div class="c n" style="left:665px;width:77px">1.89</div><div class="c l" style="left:742px;width:322px">2237 W Hillsboro Blvd, Deerfield Beach, FL 33442, USA</div><div class="c l" style="left:1064px;width:140px">seafood_restaurant</div><div class="c n3" style="left:1204px;width:69px">26.3186697</div><div class="c n3" style="left:1273px;width:72px">-80.1338029</div><div class="c l2" style="left:1345px;width:11px">C</div></div>
<div class="r" style="top:268px"><div class="rh">19</div><div class="c la" style="left:41px;width:359px">Trattoria Nonna Italian Restaurant Boca Raton</div><div class="c n" style="left:400px;width:40px">4.4</div><div class="c n" style="left:440px;width:60px">625</div><div class="c me" style="left:499px;width:86px">Medium Threat</div><div class="c n" style="left:585px;width:80px">3.05</div><div class="c n" style="left:665px;width:77px">1.9</div><div class="c l" style="left:742px;width:322px">6006 SW 18th St, Boca Raton, FL 33433, USA</div><div class="c l" style="left:1064px;width:140px">italian_restaurant</div><div class="c n3" style="left:1204px;width:69px">26.3313859</div><div class="c n3" style="left:1273px;width:72px">-80.137504</div><div class="c l2" style="left:1345px;width:11px">C</div></div>
<div class="r" style="top:287px"><div class="rh">20</div><div class="c la" style="left:41px;width:359px">PIZZA : Boca Raton</div><div class="c n" style="left:400px;width:40px">4.8</div><div class="c n" style="left:440px;width:60px">680</div><div class="c hi" style="left:499px;width:86px">High Threat</div><div class="c n" style="left:585px;width:80px">3.16</div><div class="c n" style="left:665px;width:77px">1.96</div><div class="c l" style="left:742px;width:322px">126 NE 2nd St, Boca Raton, FL 33432, USA</div><div class="c l" style="left:1064px;width:140px">pizza_restaurant</div><div class="c n3" style="left:1204px;width:69px">26.351986</div><div class="c n3" style="left:1273px;width:72px">-80.0849474</div><div class="c l2" style="left:1345px;width:11px">C</div></div>
<div class="r" style="top:306px"><div class="rh">21</div><div class="c la" style="left:41px;width:359px">Yard House</div><div class="c n" style="left:400px;width:40px">4.4</div><div class="c n" style="left:440px;width:60px">2449</div><div class="c me" style="left:499px;width:86px">Medium Threat</div><div class="c n" style="left:585px;width:80px">3.19</div><div class="c n" style="left:665px;width:77px">1.99</div><div class="c l" style="left:742px;width:322px">201 Plaza Real, Boca Raton, FL 33432, USA</div><div class="c l" style="left:1064px;width:140px">american_restaurant</div><div class="c n3" style="left:1204px;width:69px">26.35301</div><div class="c n3" style="left:1273px;width:72px">-80.08564</div><div class="c l2" style="left:1345px;width:11px">C</div></div>
<div class="r" style="top:325px"><div class="rh">22</div><div class="c la" style="left:41px;width:359px">American Harvey Bar &amp; Kitchen - Boca Raton</div><div class="c n" style="left:400px;width:40px">4.3</div><div class="c n" style="left:440px;width:60px">674</div><div class="c me" style="left:499px;width:86px">Medium Threat</div><div class="c n" style="left:585px;width:80px">3.3</div><div class="c n" style="left:665px;width:77px">2.05</div><div class="c l" style="left:742px;width:322px">351 W Plaza Real, Boca Raton, FL 33432, USA</div><div class="c l" style="left:1064px;width:140px">american_restaurant</div><div class="c n3" style="left:1204px;width:69px">26.3544021</div><div class="c n3" style="left:1273px;width:72px">-80.0857717</div><div class="c l2" style="left:1345px;width:11px">C</div></div>
<div class="r" style="top:344px"><div class="rh">23</div><div class="c la" style="left:41px;width:359px">Tucci&#x27;s Fire N Coal Thin Pizza Mizner</div><div class="c n" style="left:400px;width:40px">4.9</div><div class="c n" style="left:440px;width:60px">5388</div><div class="c hi" style="left:499px;width:86px">High Threat</div><div class="c n" style="left:585px;width:80px">3.36</div><div class="c n" style="left:665px;width:77px">2.09</div><div class="c l" style="left:742px;width:322px">555 N Federal Hwy Unit 5, Boca Raton, FL 33432, USA</div><div class="c l" style="left:1064px;width:140px">pizza_restaurant</div><div class="c n3" style="left:1204px;width:69px">26.3555972</div><div class="c n3" style="left:1273px;width:72px">-80.0866031</div><div class="c l2" style="left:1345px;width:11px">C</div></div>
<div class="r" style="top:363px"><div class="rh">24</div><div class="c la" style="left:41px;width:359px">Max&#x27;s Grille</div><div class="c n" style="left:400px;width:40px">4.4</div><div class="c n" style="left:440px;width:60px">1890</div><div class="c me" style="left:499px;width:86px">Medium Threat</div><div class="c n" style="left:585px;width:80px">3.4</div><div class="c n" style="left:665px;width:77px">2.12</div><div class="c l" style="left:742px;width:322px">404 Plaza Real, Boca Raton, FL 33432, USA</div><div class="c l" style="left:1064px;width:140px">american_restaurant</div><div class="c n3" style="left:1204px;width:69px">26.3548905</div><div class="c n3" style="left:1273px;width:72px">-80.0848573</div><div class="c l2" style="left:1345px;width:11px">C</div></div>
<div class="r" style="top:382px"><div class="rh">25</div><div class="c la" style="left:41px;width:359px">Blue Martini Lounge &amp; Pub - Boca Raton</div><div class="c n" style="left:400px;width:40px">4.4</div><div class="c n" style="left:440px;width:60px">1820</div><div class="c me" style="left:499px;width:86px">Medium Threat</div><div class="c n" style="left:585px;width:80px">3.81</div><div class="c n" style="left:665px;width:77px">2.37</div><div class="c l" style="left:742px;width:322px">5050 Town Center Cir, Boca Raton, FL 33486, USA</div><div class="c l" style="left:1064px;width:140px">bar</div><div class="c n3" style="left:1204px;width:69px">26.3624329</div><div class="c n3" style="left:1273px;width:72px">-80.1233199</div><div class="c l2" style="left:1345px;width:11px">C</div></div>
<div class="r" style="top:401px"><div class="rh">26</div><div class="c la" style="left:41px;width:359px">Seasons 52</div><div class="c n" style="left:400px;width:40px">4.4</div><div class="c n" style="left:440px;width:60px">1873</div><div class="c me" style="left:499px;width:86px">Medium Threat</div><div class="c n" style="left:585px;width:80px">3.83</div><div class="c n" style="left:665px;width:77px">2.38</div><div class="c l" style="left:742px;width:322px">1400 Glades Rd Bay 200, Boca Raton, FL 33431, USA</div><div class="c l" style="left:1064px;width:140px">american_restaurant</div><div class="c n3" style="left:1204px;width:69px">26.365603</div><div class="c n3" style="left:1273px;width:72px">-80.1120184</div><div class="c l2" style="left:1345px;width:11px">C</div></div>
<div class="r" style="top:420px"><div class="rh">27</div><div class="c la" style="left:41px;width:359px">True Food Kitchen Inc Boca Raton</div><div class="c n" style="left:400px;width:40px">4.8</div><div class="c n" style="left:440px;width:60px">1256</div><div class="c hi" style="left:499px;width:86px">High Threat</div><div class="c n" style="left:585px;width:80px">3.84</div><div class="c n" style="left:665px;width:77px">2.39</div><div class="c l" style="left:742px;width:322px">5250 Town Center Cir #131, Boca Raton, FL 33486, USA</div><div class="c l" style="left:1064px;width:140px">restaurant</div><div class="c n3" style="left:1204px;width:69px">26.3624581</div><div class="c n3" style="left:1273px;width:72px">-80.1240778</div><div class="c l2" style="left:1345px;width:11px">C</div></div>
<div class="r" style="top:439px"><div class="rh">28</div><div class="c la" style="left:41px;width:359px">Sushi by Bou</div><div class="c n" style="left:400px;width:40px">4.6</div><div class="c n" style="left:440px;width:60px">656</div><div class="c hi" style="left:499px;width:86px">High Threat</div><div class="c n" style="left:585px;width:80px">3.86</div><div class="c n" style="left:665px;width:77px">2.4</div><div class="c l" style="left:742px;width:322px">5250 Town Center Cir, Boca Raton, FL 33486, USA</div><div class="c l" style="left:1064px;width:140px">restaurant</div><div class="c n3" style="left:1204px;width:69px">26.3621666</div><div class="c n3" style="left:1273px;width:72px">-80.1249694</div><div class="c l2" style="left:1345px;width:11px">C</div></div>
<div class="r" style="top:458px"><div class="rh">29</div><div class="c la" style="left:41px;width:359px">Farmer&#x27;s Table</div><div class="c n" style="left:400px;width:40px">4.4</div><div class="c n" style="left:440px;width:60px">3688</div><div class="c me" style="left:499px;width:86px">Medium Threat</div><div class="c n" style="left:585px;width:80px">4.2</div><div class="c n" style="left:665px;width:77px">2.61</div><div class="c l" style="left:742px;width:322px">1901 N Military Trl, Boca Raton, FL 33431, USA</div><div class="c l" style="left:1064px;width:140px">restaurant</div><div class="c n3" style="left:1204px;width:69px">26.3509541</div><div class="c n3" style="left:1273px;width:72px">-80.1204411</div><div class="c l2" style="left:1345px;width:11px">C</div></div>
<div style="left:0;top:0;width:41px;height:21px;background:#f8f9fb;border-right:4px solid #c4c7cb;border-bottom:1px solid #c9ccd1"></div>
<div class="ch" style="left:41px;width:359px">A</div><div class="ch" style="left:400px;width:40px">B</div><div class="ch" style="left:440px;width:60px">C</div><div class="ch" style="left:500px;width:85px">D</div><div class="ch" style="left:585px;width:80px">E</div><div class="ch" style="left:665px;width:77px">F</div><div class="ch" style="left:742px;width:322px">G</div><div class="ch" style="left:1064px;width:140px">H</div><div class="ch" style="left:1204px;width:69px">I</div><div class="ch" style="left:1273px;width:72px">J</div><div class="ch" style="left:1345px;width:11px"></div>
<div style="left:0;top:22px;width:41px;height:19px;background:#fafbfc;border-right:1px solid #c9ccd1;font-size:10px;line-height:19px;text-align:center;color:#1f1f1f">1</div>
<div class="hc" style="left:41px;width:359px">Competitor Name</div><div class="hc" style="left:400px;width:40px">Rating</div><div class="hc" style="left:440px;width:60px"># Reviews</div><div class="hc" style="left:500px;width:85px">Threat Level</div><div class="hc" style="left:585px;width:80px">Distance (km)</div><div class="hc" style="left:665px;width:77px">Distance (mi)</div><div class="hc" style="left:742px;width:322px">Address</div><div class="hc" style="left:1064px;width:140px">Primary Type</div><div class="hc" style="left:1204px;width:69px">Latitude</div><div class="hc" style="left:1273px;width:72px">Longitude</div><div class="hc" style="left:1345px;width:11px">Place ID</div>
<div style="left:0;top:41px;width:1356px;height:4px;background:#c4c7cb"></div>
<div style="left:40px;top:21px;width:361px;height:20px;border:1px solid #4d5fc0;box-shadow:inset 0 0 0 1px rgba(60,90,200,.35)"></div>
<div style="left:396px;top:37px;width:9px;height:9px;border-radius:5px;background:#1a55c8;border:1px solid #fff"></div>
</div>
<div style="left:1356px;top:215px;width:10px;height:480px;background:#fff;border-left:1px solid #e3e5e8"></div>
<div style="left:1356px;top:215px;width:9px;height:21px;background:#fff;border-bottom:1px solid #c9ccd1;border-right:1px solid #d9dce0"></div>
<div style="left:1356px;top:256px;width:9px;height:4px;background:#c4c7cb"></div>
<div style="left:1356px;top:263px;width:8px;height:23px;border-radius:4px;background:#c9cccf"></div>
<div style="left:0;top:692px;width:1366px;height:14px;background:#fbfcfe;border-top:1px solid #e3e5e8"></div>
<div style="left:150px;top:694px;width:480px;height:8px;border-radius:4px;background:#d6d9dc"></div>
<div style="left:0;top:706px;width:1366px;height:32px;background:#f8fafd"></div>
<div style="left:193px;top:706px;width:88px;height:32px;background:#e1e9f7"></div>
<svg style="left:50px;top:716px" width="12" height="12" viewBox="0 0 12 12"><path d="M6 0v12M0 6h12" stroke="#444746" stroke-width="1.500"/></svg>
<div class="st" id="s_input" style="left:131px">Input</div>
<svg style="left:174.5px;top:721.5px" width="7" height="4" viewBox="0 0 8 5"><path d="M0 0h8L4 4.500z" fill="#444746"/></svg>
<div class="st" id="s_results" style="left:205px;color:#1858c8;font-weight:bold;font-size:13px;letter-spacing:0;-webkit-text-stroke:0">Results</div>
<svg style="left:262.5px;top:721.5px" width="7" height="4" viewBox="0 0 8 5"><path d="M0 0h8L4 4.500z" fill="#1858c8"/></svg>
<div class="st" id="s_analysis" style="left:291px">Analysis</div>
<svg style="left:353.5px;top:721.5px" width="7" height="4" viewBox="0 0 8 5"><path d="M0 0h8L4 4.500z" fill="#444746"/></svg>
<div class="st" id="s_cat" style="left:383px">Category List</div>
<svg style="left:477.5px;top:721.5px" width="7" height="4" viewBox="0 0 8 5"><path d="M0 0h8L4 4.500z" fill="#444746"/></svg>
<div class="st" id="s_dbg" style="left:508px">Debug_Log</div>
<svg style="left:588.5px;top:721.5px" width="7" height="4" viewBox="0 0 8 5"><path d="M0 0h8L4 4.500z" fill="#444746"/></svg>
<div class="st" id="s_s3" style="left:618px">Sheet3</div>
<svg style="left:672.5px;top:721.5px" width="7" height="4" viewBox="0 0 8 5"><path d="M0 0h8L4 4.500z" fill="#444746"/></svg>
<svg style="left:1337px;top:718px" width="7" height="10" viewBox="0 0 7 10"><path d="M6 1L1.500 5 6 9" fill="none" stroke="#444746" stroke-width="1.600"/></svg>
<div style="left:1193px;top:669px;width:166px;height:29px;border-radius:14px;background:#fff;box-shadow:0 1px 3px rgba(60,64,67,.35),0 1px 2px rgba(60,64,67,.2)"></div>
<svg style="left:1202px;top:677px" width="12" height="12" viewBox="0 0 12 12"><rect x=".700" y=".700" width="10.600" height="10.600" rx="1" fill="none" stroke="#444746" stroke-width="1.300"/><path d="M.700 4h10.600M4.300 4v7.300M7.800 4v7.300" stroke="#444746" stroke-width="1.200"/></svg>
<div id="ctt" style="left:1223px;top:675px;font-size:11.500px;line-height:14px;color:#3c4043;white-space:nowrap">Convert to table</div>
<svg style="left:1318.5px;top:681.5px" width="7" height="4" viewBox="0 0 8 5"><path d="M0 0h8L4 4.500z" fill="#444746"/></svg>
<svg style="left:1340px;top:678px" width="10" height="10" viewBox="0 0 10 10"><path d="M1 1l8 8M9 1L1 9" stroke="#3c4043" stroke-width="1.400"/></svg>
<div style="left:16px;top:676px;width:46px;height:46px;border-radius:23px;background:#1a6ce0"></div>
<div style="left:13px;top:232px;width:53px;height:284px;border-radius:14px;background:#2e2e2e;box-shadow:0 1px 3px rgba(0,0,0,.3)"></div>
<div style="left:22px;top:238px;width:36px;height:36px;border-radius:18px;background:#171717"></div>
<div style="left:32px;top:248px;width:16px;height:16px;border-radius:2px;background:#6a6a6a"></div>
<div style="left:13px;top:279px;width:53px;text-align:center;font-size:11.500px;font-weight:bold;line-height:14px;color:#b4b4b4">0:00</div>
<svg style="left:33.5px;top:311px" width="13" height="16" viewBox="0 0 13 16"><rect x="0" y="0" width="4.600" height="16" rx="1" fill="#505050"/><rect x="8.400" y="0" width="4.600" height="16" rx="1" fill="#505050"/></svg>
<svg style="left:30.5px;top:348px" width="19" height="20" viewBox="0 0 19 20"><path d="M4.500 5A7.300 7.300 0 1 1 2.200 10.500" fill="none" stroke="#505050" stroke-width="2"/><path d="M1.500 1.500l1 6.200 5.500-2z" fill="#505050"/></svg>
<svg style="left:33px;top:389px" width="14" height="17" viewBox="0 0 14 17"><path d="M0.500 3.500h13M4.500 3.500V1h5v2.500M2 3.500l.8 12.500h8.400l.8-12.500" fill="none" stroke="#4a4a4a" stroke-width="1.800"/><path d="M5.300 7v6M8.700 7v6" stroke="#4a4a4a" stroke-width="1.500"/></svg>
<svg style="left:31.5px;top:441px" width="17" height="11" viewBox="0 0 17 11"><path d="M8.500 0v11L0 5.500zM17 0v11L8.500 5.500z" fill="#4a4a4a"/></svg>
<svg style="left:33px;top:478px" width="14" height="12" viewBox="0 0 14 12"><g fill="#474747"><circle cx="2" cy="2" r="1.700"/><circle cx="7" cy="2" r="1.700"/><circle cx="12" cy="2" r="1.700"/><circle cx="2" cy="6" r="1.700"/><circle cx="7" cy="6" r="1.700"/><circle cx="12" cy="6" r="1.700"/><circle cx="2" cy="10" r="1.700"/><circle cx="7" cy="10" r="1.700"/><circle cx="12" cy="10" r="1.700"/></g></svg>
<div style="left:7px;top:531px;width:200px;height:200px;border-radius:100px;background:#000"></div>
<svg style="left:7px;top:531px" width="200" height="200" viewBox="0 0 200 200"><defs><linearGradient id="lg" gradientUnits="userSpaceOnUse" x1="60" y1="150" x2="140" y2="50"><stop offset="0" stop-color="#8ec63f"/><stop offset=".55" stop-color="#bfd730"/><stop offset="1" stop-color="#dbe32a"/></linearGradient></defs><g fill="none" stroke="url(#lg)" stroke-width="13" stroke-linecap="round" stroke-linejoin="round"><path d="M136.500 99L126 97C125.500 86 123 74 118 65C112 54 105 47 98 48C91 49 85 56 86.500 66C88 77 96 89 108 97C112 99.500 116 101 119 102C123 114 126 128 129.500 141"/><path d="M117 101.500C108 101 97 100 87 103C73 108 64 119 65 131C66 143 74 151 86 150C100 149 111 140 116 128C118 123 120 118 121 113"/></g></svg>
<svg style="left:362px;top:450px" width="12" height="18.500" viewBox="0 0 13 20"><path d="M1 1v15l3.600-3.400 2.500 5.900 2.300-1-2.500-5.800H12z" fill="#fff" stroke="#222" stroke-width="1.100" stroke-linejoin="round"/></svg>
</body>
</html>
